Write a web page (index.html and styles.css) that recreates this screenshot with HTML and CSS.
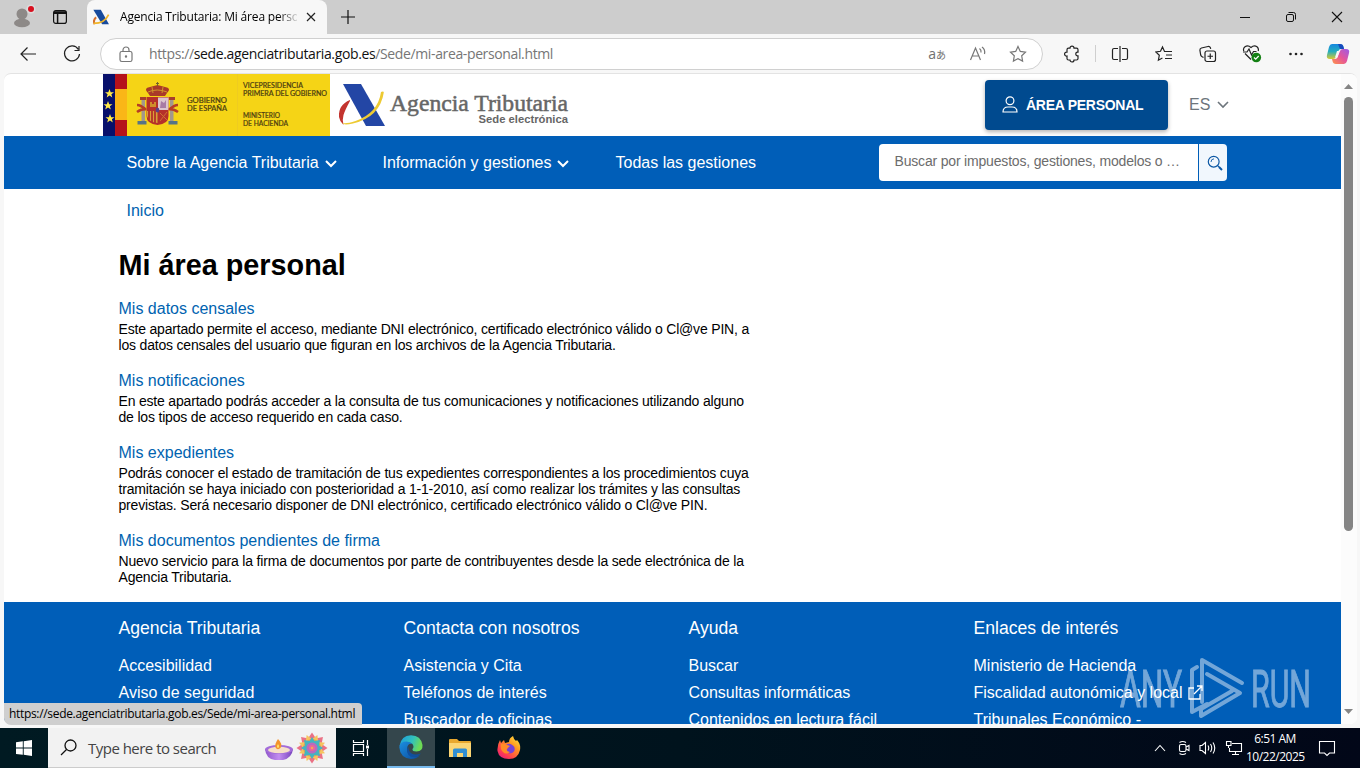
FILE: index.html
```html
<!DOCTYPE html>
<html lang="es">
<head>
    <meta charset="UTF-8">
    <title>Agencia Tributaria: Mi área personal</title>
    <link rel="stylesheet" href="styles.css">
</head>
<body>
<!-- pestañas -->
<div class="tabs">
    <div class="tabs-left">
        <svg class="profile" width="24" height="26" viewBox="0 0 24 26">
            <circle cx="12" cy="10" r="5.5" fill="#8d8987"/>
            <ellipse cx="12" cy="19" rx="8" ry="4.3" fill="#8d8987"/>
            <circle cx="21" cy="5" r="4.6" fill="#dcdcdc"/>
            <circle cx="21" cy="5" r="3" fill="#d8101f"/>
        </svg>
        <svg width="16" height="16" viewBox="0 0 16 16" fill="none" stroke="#111" stroke-width="1.2">
            <rect x="1.6" y="1.6" width="12.8" height="12.8" rx="2.2"/>
            <path d="M2 3h12M2 4.3h12M5.6 4v10" stroke-width="1.5"/>
        </svg>
    </div>
    <div class="tab">
        <svg width="17" height="16" viewBox="0 0 50 46">
            <path d="M9 24Q-1 34 5 44" fill="none" stroke="#d5702c" stroke-width="6"/>
            <path d="M1 2h22l24 42H27z" fill="#174a9c"/>
            <path d="M2 42Q34 42 46 16" fill="none" stroke="#f0b429" stroke-width="5"/>
        </svg>
        <span class="tab-title">Agencia Tributaria: Mi área personal</span>
        <svg width="10" height="10" viewBox="0 0 10 10" stroke="#222" stroke-width="1.2"><path d="M1 1l8 8M9 1l-8 8"/></svg>
    </div>
    <svg class="plus" width="14" height="14" viewBox="0 0 14 14" stroke="#111" stroke-width="1.2"><path d="M7 0v14M0 7h14"/></svg>
    <div class="win-buttons">
        <svg width="46" height="34" viewBox="0 0 46 34" stroke="#111"><path d="M18 17.5h10"/></svg>
        <svg width="46" height="34" viewBox="0 0 46 34" fill="none" stroke="#111"><rect x="18.5" y="14.5" width="7" height="7" rx="1.5"/><path d="M20.5 12.5h5a2 2 0 0 1 2 2v5"/></svg>
        <svg width="46" height="34" viewBox="0 0 46 34" stroke="#111" stroke-width="1.1"><path d="M18 12l10 10M28 12l-10 10"/></svg>
    </div>
</div>

<!-- barra de direcciones -->
<div class="toolbar">
    <div class="cell"><svg width="18" height="16" viewBox="0 0 18 16"><path d="M8.5 1.5L2 8l6.500 6.500M2 8h15"/></svg></div>
    <div class="cell"><svg width="18" height="18" viewBox="0 0 18 18"><path d="M15.300 4.300A7.500 7.500 0 1 0 16.500 9M16 1v4.500h-4.500"/></svg></div>
    <div class="address">
        <svg class="lock" width="14" height="17" viewBox="0 0 14 17"><rect x="1" y="5.500" width="12" height="10" rx="1.800"/><path d="M4 5.500V4a3 3 0 0 1 6 0v1.500"/><circle cx="7" cy="10.500" r=".6"/></svg>
        <span class="url">https://<b>sede.agenciatributaria.gob.es</b>/Sede/mi-area-personal.html</span>
        <span class="translate">a<i>あ</i></span>
        <svg class="read" width="18" height="16" viewBox="0 0 18 16"><path d="M1.500 14L6.500 2l5 12M3.200 10h6.600M10.500 2.500q2 1.500 1.500 4M13 1q3.500 2.500 2.500 7"/></svg>
        <svg width="18" height="18" viewBox="0 0 18 18"><path d="M9 1.500l2.300 4.900 5.200.7-3.800 3.700.9 5.300L9 13.600l-4.600 2.500.9-5.300L1.500 7.100l5.200-.7z"/></svg>
    </div>
    <div class="cell"><svg width="18" height="18" viewBox="0 0 18 18"><path d="M5.500 3.200H7a2 2 0 0 1 4 0h2.500q1.500 0 1.500 1.500v2.500h-.8a1.900 1.900 0 0 0 0 3.700h.8v2.600q0 1.500-1.500 1.500H11a2 2 0 0 1-4 0H5.500Q4 15 4 13.500V11a2 2 0 1 1 0-3.900V4.700q0-1.500 1.500-1.500z"/></svg></div>
    <div class="divider"></div>
    <div class="cell"><svg width="18" height="18" viewBox="0 0 18 18"><path d="M7 3.500H3a1.500 1.500 0 0 0-1.500 1.500v8A1.500 1.500 0 0 0 3 14.500h4M11 3.500h4A1.500 1.500 0 0 1 16.500 5v8a1.500 1.500 0 0 1-1.500 1.500h-4M9 1v16"/></svg></div>
    <div class="cell"><svg width="18" height="18" viewBox="0 0 18 18"><path d="M11 6.500H9.500L7.500 2 5.500 6.300l-4.700.7 3.500 3.300-.9 4.900 4-2.200M11 6.500h6M11 10h6M10 13.500h7"/></svg></div>
    <div class="cell"><svg width="18" height="18" viewBox="0 0 18 18"><rect x="6" y="6" width="10.500" height="10.500" rx="2"/><path d="M11.250 8.500v5.500M8.500 11.250H14M4.500 12.500L2.800 11.500q-.8-.5-1.100-1.500L.9 5.200Q.8 3.500 2.500 3L9 1.500q1.800-.2 2.400 1.300l.3 1"/></svg></div>
    <div class="cell"><svg width="20" height="19" viewBox="0 0 20 19"><path d="M9 15.500L3 9.500M1.800 7Q.8 4.500 3 2.700q3-2 6 .8 3-2.800 6-.8 2 1.800 1.200 4.300M1 8h4l2-3 2.500 6 2-3.500h3"/><circle cx="14.300" cy="13.500" r="4.800" fill="#148014" stroke="none"/><path d="M12 13.500l1.700 1.700 3-3.200" stroke="#fff"/></svg></div>
    <div class="cell"><svg width="16" height="4" viewBox="0 0 16 4"><g fill="#222" stroke="none"><circle cx="2.500" cy="2" r="1.300"/><circle cx="8" cy="2" r="1.300"/><circle cx="13.500" cy="2" r="1.300"/></g></svg></div>
    <div class="cell copilot"><svg width="24" height="22" viewBox="0 0 24 22">
        <defs>
            <linearGradient id="c1" x1="0" y1="0" x2="0" y2="1"><stop offset="0" stop-color="#1687e0"/><stop offset=".5" stop-color="#25aebd"/><stop offset="1" stop-color="#d9c931"/></linearGradient>
            <linearGradient id="c2" x1="1" y1="0" x2="0" y2="1"><stop offset="0" stop-color="#9b5be8"/><stop offset=".5" stop-color="#e5559a"/><stop offset="1" stop-color="#ff9448"/></linearGradient>
        </defs>
        <g stroke="none">
            <path d="M6 1h8q3 0 3.500 3l.5 2h-3q-2 0-2.600 2L10 14q-.8 2-3 2H4q-4 0-3-4L3 4q.8-3 3-3z" fill="url(#c1)"/>
            <path d="M18 21h-8q-3 0-3.500-3L6 16h3q2 0 2.600-2L14 8q.8-2 3-2h3q4 0 3 4l-2 8q-.8 3-3 3z" fill="url(#c2)"/>
            <path d="M12 1h2q3 0 3.500 3l.5 2h-4z" fill="#174bbd"/>
            <path d="M11 8h2.500l-2 6.500H9z" fill="#f7f7f7"/>
        </g>
    </svg></div>
</div>

<!-- ventana -->
<div class="window">
    <div class="page">
        <header class="header">
            <svg class="gob" width="227" height="62" viewBox="0 0 227 62">
                <rect width="227" height="62" fill="#f5d416"/>
                <rect width="12" height="62" fill="#08106b"/>
                <rect x="12" width="12" height="62" fill="#b5121b"/>
                <rect x="12" y="15" width="12" height="31" fill="#fab617"/>
                <path d="M134.500 0v62" stroke="#efcc20"/>
                <g fill="#ffe94a">
                    <path id="st" d="M6.500 15l1.200 3.200h3.300l-2.600 2.100.9 3.300-2.800-2-2.800 2 .9-3.300L2 18.200h3.300z"/>
                    <use href="#st" y="12" x="-1.500"/>
                    <use href="#st" y="25" x=".5"/>
                </g>
                <!-- escudo -->
                <path d="M45 19q-5-5 2-6l7.500-2 7.500 2q7 1 2 6l-2 3H47z" fill="#a93a28"/>
                <path d="M45 18q9-4 19 0M49 13l1 6M60 13l-1 6" fill="none" stroke="#d0952c"/>
                <path d="M54.500 8v4M53 9.500h3" stroke="#74602d"/>
                <path d="M43.500 23h22v19q0 8-11 9-11-1-11-9z" fill="#b5302a"/>
                <path d="M55 23.500h10.500V36H55z" fill="#dcc4cf"/>
                <path d="M57 34l1-7 3 2 2-3v8z" fill="#a87ba5"/>
                <path d="M47 33v-5h2v2h2v-2h2v5z" fill="#cf8e2a"/>
                <path d="M44 37h10.500v12q-9-1-10.500-7z" fill="#d8a137"/>
                <path d="M46 37v9M49 37v11M52 37v12" stroke="#b5302a" stroke-width="1.800"/>
                <path d="M57 39l7 7M64 38l-7 9" stroke="#cf7030"/>
                <ellipse cx="54.500" cy="36" rx="1.800" ry="2.500" fill="#5a3f86"/>
                <path d="M38.500 25h3.500v23h-3.500zM67 25h3.500v23H67z" fill="#a3988c"/>
                <path d="M37 23h6v3h-6zM66 23h6v3h-6z" fill="#a63f2c"/>
                <path d="M34.500 47h9v3.500h-9zM65.500 47h9v3.500h-9z" fill="#577485"/>
                <path d="M34 31q4 0 9 5M34 38q4-3 9-3M75 31q-4 0-9 5M75 38q-4-3-9-3" fill="none" stroke="#b63d25" stroke-width="2.500"/>
                <g class="gob-text">
                    <text x="84" y="29" textLength="40" lengthAdjust="spacingAndGlyphs">GOBIERNO</text>
                    <text x="84" y="37" textLength="40" lengthAdjust="spacingAndGlyphs">DE ESPAÑA</text>
                    <text x="140" y="13.500" textLength="60" lengthAdjust="spacingAndGlyphs">VICEPRESIDENCIA</text>
                    <text x="140" y="21.500" textLength="84" lengthAdjust="spacingAndGlyphs">PRIMERA DEL GOBIERNO</text>
                    <text x="140" y="44" textLength="37" lengthAdjust="spacingAndGlyphs">MINISTERIO</text>
                    <text x="140" y="51.500" textLength="45" lengthAdjust="spacingAndGlyphs">DE HACIENDA</text>
                </g>
            </svg>
            <svg class="aeat" width="240" height="62" viewBox="0 0 240 62">
                <path d="M15 26Q3 31 4 43q.5 4 4.500 8-1.500-5 0-10Q10 36 15 27z" fill="#c3342f"/>
                <path d="M8 10h18l24 42H31z" fill="#2346a5"/>
                <path d="M7.500 49q4 1 13-2Q43 39 46 18q2.800-1 2.800.5Q45 43 18 49.500q-10 2-10.500-.5z" fill="#edca32"/>
                <text class="aeat-name" x="55" y="37" textLength="178" lengthAdjust="spacingAndGlyphs">Agencia Tributaria</text>
                <text class="aeat-sub" x="143.500" y="49" textLength="89.500" lengthAdjust="spacingAndGlyphs">Sede electrónica</text>
            </svg>
            <a class="btn-area">
                <svg width="16" height="17" viewBox="0 0 16 17" fill="none" stroke="#fff" stroke-width="1.200"><circle cx="8" cy="4.800" r="3.900"/><path d="M1 16q0-5 5-5h4q5 0 5 5z"/></svg>
                <span>ÁREA PERSONAL</span>
            </a>
            <div class="lang">ES <svg width="12" height="8" viewBox="0 0 12 8" fill="none" stroke="#6d757c" stroke-width="1.600"><path d="M1 1l5 5 5-5"/></svg></div>
        </header>
        <nav class="nav">
            <a class="nav-1">Sobre la Agencia Tributaria <svg width="12" height="8" viewBox="0 0 12 8"><path d="M1 1l5 5 5-5"/></svg></a>
            <a class="nav-2">Información y gestiones <svg width="12" height="8" viewBox="0 0 12 8"><path d="M1 1l5 5 5-5"/></svg></a>
            <a class="nav-3">Todas las gestiones</a>
            <div class="search">
                <div class="search-input">Buscar por impuestos, gestiones, modelos o …</div>
                <div class="search-btn"><svg width="16" height="16" viewBox="0 0 16 16" fill="none" stroke="#0b57a4" stroke-width="1.200"><circle cx="6.700" cy="6.700" r="5.400"/><path d="M10.700 10.700l1.500 1.500"/><path d="M12 12l3 3" stroke-width="2"/><path d="M4 7q0-3 3-3.200" stroke-width=".9"/></svg></div>
            </div>
        </nav>
        <main class="main">
            <a class="miga">Inicio</a>
            <h1>Mi área personal</h1>
            <dl>
                <dt>Mis datos censales</dt>
                <dd>Este apartado permite el acceso, mediante DNI electrónico, certificado electrónico válido o Cl@ve PIN, a<br>los datos censales del usuario que figuran en los archivos de la Agencia Tributaria.</dd>
                <dt>Mis notificaciones</dt>
                <dd>En este apartado podrás acceder a la consulta de tus comunicaciones y notificaciones utilizando alguno<br>de los tipos de acceso requerido en cada caso.</dd>
                <dt>Mis expedientes</dt>
                <dd>Podrás conocer el estado de tramitación de tus expedientes correspondientes a los procedimientos cuya<br>tramitación se haya iniciado con posterioridad a 1-1-2010, así como realizar los trámites y las consultas<br>previstas. Será necesario disponer de DNI electrónico, certificado electrónico válido o Cl@ve PIN.</dd>
                <dt>Mis documentos pendientes de firma</dt>
                <dd>Nuevo servicio para la firma de documentos por parte de contribuyentes desde la sede electrónica de la<br>Agencia Tributaria.</dd>
            </dl>
        </main>
        <footer class="footer">
            <div>
                <h2>Agencia Tributaria</h2>
                <p>Accesibilidad</p>
                <p>Aviso de seguridad</p>
            </div>
            <div>
                <h2>Contacta con nosotros</h2>
                <p>Asistencia y Cita</p>
                <p>Teléfonos de interés</p>
                <p>Buscador de oficinas</p>
            </div>
            <div>
                <h2>Ayuda</h2>
                <p>Buscar</p>
                <p>Consultas informáticas</p>
                <p>Contenidos en lectura fácil</p>
            </div>
            <div>
                <h2>Enlaces de interés</h2>
                <p>Ministerio de Hacienda</p>
                <p>Fiscalidad autonómica y local <svg width="15" height="15" viewBox="0 0 15 15" fill="none" stroke="#fff" stroke-width="1.300"><path d="M6 3H1v11h11V9M9 1h5v5M14 1L6 9"/></svg></p>
                <p>Tribunales Económico -</p>
            </div>
        </footer>
    </div>
    <div class="scroll">
        <svg width="9" height="5" viewBox="0 0 9 5"><path d="M4.500 0L9 5H0z" fill="#858585"/></svg>
        <div class="thumb"></div>
        <svg width="9" height="5" viewBox="0 0 9 5"><path d="M0 0h9L4.500 5z" fill="#858585"/></svg>
    </div>
</div>

<!-- barra de tareas -->
<div class="taskbar">
    <div class="start"><svg width="16" height="16" viewBox="0 0 16 16" fill="#fff"><path d="M0 2.200l6.800-.9v6.300H0zM7.700 1.200L16 0v7.600H7.700zM0 8.500h6.800v6.300L0 13.900zM7.700 8.500H16V16l-8.300-1.200z"/></svg></div>
    <div class="task-search">
        <svg width="17" height="17" viewBox="0 0 17 17" fill="none" stroke="#111" stroke-width="1.300"><circle cx="10.500" cy="6.500" r="5.500"/><path d="M6.500 10.500L1 16"/></svg>
        <span>Type here to search</span>
        <svg class="diwali" width="64" height="32" viewBox="0 0 64 32">
            <defs><linearGradient id="bowl" x2="1"><stop stop-color="#9057ca"/><stop offset=".5" stop-color="#c28cf0"/><stop offset="1" stop-color="#7642bb"/></linearGradient></defs>
            <path d="M1 17q1 10 10 11h8q9-2 10-11z" fill="url(#bowl)"/>
            <ellipse cx="15" cy="17.500" rx="14" ry="4.500" fill="#a36cda"/>
            <ellipse cx="15" cy="18" rx="11" ry="3.200" fill="#f6dfc8"/>
            <path d="M14 7q5 5 2.500 9-3 2.500-5-.5Q10.500 12 14 7z" fill="#f4942d"/>
            <path d="M14 12q2 2 .5 4-2 0-1.500-2z" fill="#ffe36a"/>
            <g transform="translate(48 16)">
                <g id="pet"><path d="M-5-8L0-15.500 5-8z" fill="#ea7185"/></g>
                <use href="#pet" transform="rotate(45)"/><use href="#pet" transform="rotate(90)"/><use href="#pet" transform="rotate(135)"/>
                <use href="#pet" transform="rotate(180)"/><use href="#pet" transform="rotate(225)"/><use href="#pet" transform="rotate(270)"/><use href="#pet" transform="rotate(315)"/>
                <g fill="#f5c45f" transform="rotate(22.5)">
                    <path id="p1" d="M-4-7L0-14 4-7z"/>
                    <use href="#p1" transform="rotate(45)"/><use href="#p1" transform="rotate(90)"/><use href="#p1" transform="rotate(135)"/>
                    <use href="#p1" transform="rotate(180)"/><use href="#p1" transform="rotate(225)"/><use href="#p1" transform="rotate(270)"/><use href="#p1" transform="rotate(315)"/>
                </g>
                <circle r="9" fill="#eba34c"/>
                <path d="M0-11l2.500 4L8-8 7-2.500 11 0 7 2.500 8 8 2.500 7 0 11-2.500 7-8 8-7 2.500-11 0-7-2.500-8-8-2.500-7z" fill="#45b3c0"/>
                <circle r="5.500" fill="#b969bf"/><circle r="3" fill="#ec6796"/><circle r="1.200" fill="#f7a65b"/>
            </g>
        </svg>
    </div>
    <div class="app"><svg width="18" height="18" viewBox="0 0 18 18" fill="none" stroke="#fff" stroke-width="1.200"><path d="M1.500 1v2.500h10V1M1.500 17v-2.500h10V17M1.500 5.500h10v7h-10zM15.500 1v5M15.500 10v7"/><path d="M14 6.500h3v3h-3z" fill="#fff" stroke="none"/></svg></div>
    <div class="app active"><svg width="24" height="24" viewBox="0 0 24 24">
        <defs>
            <linearGradient id="e1" x2="1" y2=".3"><stop stop-color="#1c9ade"/><stop offset=".6" stop-color="#31c1bd"/><stop offset="1" stop-color="#6ddb55"/></linearGradient>
            <linearGradient id="e2" x2="1" y2="1"><stop stop-color="#1b8fe0"/><stop offset="1" stop-color="#0b4a9b"/></linearGradient>
        </defs>
        <path d="M.5 11Q2 .500 12 .200 22 .500 23.500 10q.5 6-6 6.500-4.500 0-4-2.500 2-2 0-5-4-4-13 2z" fill="url(#e1)"/>
        <path d="M.300 12Q1 6.500 7.500 6.500q4 0 6 2.500-5-1-5.500 5 .5 7 8 7.500 3 0 5-1.500-3 4-9 4Q1 23 .300 12z" fill="url(#e2)"/>
        <path d="M9 11Q6 18 11.500 21.500q6 2 10.500-3-9 3-12-3z" fill="#104f9e"/>
    </svg></div>
    <div class="app"><svg width="22" height="20" viewBox="0 0 22 20">
        <path d="M0 2q0-1 1-1h7l2 2h11q1 0 1 1v15H0z" fill="#e8a82e"/>
        <path d="M0 5h22v14H0z" fill="#fbd573"/>
        <path d="M4 19v-7q0-1.500 1.500-1.500h11Q18 10.500 18 12v7h-4v-4H8v4z" fill="#328fd2"/>
    </svg></div>
    <div class="app"><svg width="24" height="24" viewBox="0 0 24 24">
        <defs><linearGradient id="ff" x1="1" y1="0" x2=".2" y2="1"><stop stop-color="#fff044"/><stop offset=".4" stop-color="#ff9820"/><stop offset=".8" stop-color="#ff3b50"/><stop offset="1" stop-color="#e52278"/></linearGradient></defs>
        <path d="M3 4l1 3 3-3 1 3 4-1q0-4 4-6 .500 3 3 5l1-1q4 4 3 10-2 9-11 9Q2 23 .500 15 0 9 3 4z" fill="url(#ff)"/>
        <path d="M9 9q3-2 5.500-.5 4 2 3 6-1.500 3-5 3-4-.5-4-4l3-1.500z" fill="#7542d8"/>
        <path d="M4 8q4-1 6 1l3 1-3 2.500q-1 3 3 3.500-4 3-7 0Q3 13 4 8z" fill="#ff8c26"/>
    </svg></div>
    <div class="tray">
        <svg width="12" height="8" viewBox="0 0 12 8"><path d="M1 7l5-5.500L11 7"/></svg>
        <svg width="14" height="16" viewBox="0 0 14 16"><rect x="2.500" y="4.500" width="6.500" height="7" rx="1.500"/><path d="M9 7l3-1.500v5L9 9M2.500 2.500q3-2 6.500 0M2.500 13.500q3 2 6.500 0"/></svg>
        <svg width="18" height="16" viewBox="0 0 18 16"><path d="M1 5.500h2L6.500 2.500v11L3 10.500H1zM9 5.500q1.500 2.500 0 5M11.500 4q2.500 4 0 8M14 2.500q3.500 5.500 0 11"/></svg>
        <svg width="18" height="16" viewBox="0 0 18 16"><path d="M7 3.500h9.500v8h-12V8M10.500 11.500v3M7 14.500h7M1.500 1.500H6v4H1.500zM3.500 5.500V8"/></svg>
        <div class="clock">6:51 AM<br>10/22/2025</div>
        <svg width="18" height="17" viewBox="0 0 18 17"><path d="M1.500 1.500h15v11.500h-5L9 15.500 6.500 13h-5z"/></svg>
    </div>
</div>

<div class="status">https://sede.agenciatributaria.gob.es/Sede/mi-area-personal.html</div>
<svg class="anyrun" width="200" height="70" viewBox="0 0 200 70">
    <text x="5" y="55" textLength="62" lengthAdjust="spacingAndGlyphs">ANY</text>
    <text x="136" y="55" textLength="60" lengthAdjust="spacingAndGlyphs">RUN</text>
    <g fill="none" stroke="#fff" stroke-width="4" stroke-linejoin="round" stroke-linecap="round">
        <path d="M87 50V8l40 23M92 22l33 19-39 23V57l31-18"/>
        <path d="M82 15l-5 3v42l15-8"/>
    </g>
</svg>
</body>
</html>
```
FILE: styles.css
```css
*{
    padding: 0;
    margin: 0;
    box-sizing: border-box;
}
body{
    width: 1360px;
    height: 768px;
    overflow: hidden;
    position: relative;
    display: flex;
    flex-direction: column;
    background: #f7f7f7;
    font-family: "Liberation Sans", Arial, sans-serif;
    font-size: 16px;
    color: #000;
}
svg{
    display: block;
    flex: none;
}

/* navegador */
.tabs{
    height: 34px;
    flex: none;
    display: flex;
    align-items: center;
    background: #cdcdcd;
}
.tabs-left{
    width: 87px;
    height: 34px;
    padding: 0 0 0 10px;
    display: flex;
    align-items: center;
    gap: 18px;
}
.profile{
    overflow: visible;
}
.tab{
    width: 240px;
    height: 34px;
    padding: 0 11px 0 6px;
    display: flex;
    align-items: center;
    background: #f7f7f7;
    border-radius: 8px 8px 0 0;
}
.tab-title{
    width: 178px;
    margin: 0 9px 0 10px;
    overflow: hidden;
    white-space: nowrap;
    font: 12px/20px "Open Sans", sans-serif;
    letter-spacing: -.18px;
    -webkit-mask-image: linear-gradient(90deg, #000 158px, transparent 180px);
    mask-image: linear-gradient(90deg, #000 158px, transparent 180px);
}
.plus{
    margin-left: 14px;
}
.win-buttons{
    margin-left: auto;
    display: flex;
}
.toolbar{
    height: 39px;
    flex: none;
    padding: 0 2px 0 6px;
    display: flex;
    align-items: center;
    fill: none;
    stroke: #222;
    stroke-width: 1.2;
}
.cell{
    width: 44px;
    display: flex;
    justify-content: center;
}
.copilot{
    width: 40px;
}
.divider{
    width: 1px;
    height: 17px;
    margin: 0 2px 0 1px;
    background: #cfcfcf;
}
.address{
    width: 943px;
    height: 32px;
    margin: 1px 7px 0 6px;
    padding: 0 15px 0 18px;
    display: flex;
    align-items: center;
    border: 1px solid #d0d0d0;
    border-radius: 16px;
    background: #fff;
    stroke: #777;
}
.url{
    flex: 1;
    margin-left: 16px;
    font: 14px/20px "Open Sans", sans-serif;
    letter-spacing: -.37px;
    color: #767676;
}
.url b{
    font-weight: normal;
    color: #111;
}
.translate{
    font: 14px/20px "Open Sans", sans-serif;
    color: #707070;
}
.translate i{
    font: 10px "Noto Sans CJK JP", sans-serif;
}
.read{
    margin: 0 22px 0 23px;
}

/* cabecera */
.window{
    height: 651px;
    width: 1353px;
    flex: none;
    margin: 0 0 4px 4px;
    display: flex;
    border-top: 1px solid #e3e3e3;
    border-radius: 7px;
    overflow: hidden;
    background: #fff;
}
.page{
    width: 1337px;
    height: 650px;
    overflow: hidden;
}
.header{
    height: 62px;
    padding-left: 99px;
    display: flex;
}
.gob-text{
    font: 6.8px Lato, sans-serif;
    fill: #4a3c12;
    stroke: #4a3c12;
    stroke-width: .2px;
}
.aeat{
    margin-left: 5px;
}
.aeat-name{
    font: 23px "Liberation Serif", serif;
    fill: #666;
    stroke: #666;
    stroke-width: .5px;
}
.aeat-sub{
    font: bold 11.5px "Liberation Sans", sans-serif;
    fill: #666;
}
.btn-area{
    width: 183px;
    height: 50px;
    margin: 6px 0 0 410px;
    padding: 0 0 1px 17px;
    display: flex;
    align-items: center;
    gap: 8px;
    border-radius: 4px;
    background: #004a8f;
    box-shadow: 0 2px 4px rgba(0,0,0,.3);
    color: #fff;
    font-size: 14px;
    letter-spacing: -.27px;
    font-weight: bold;
}
.lang{
    margin-left: 21px;
    height: 61px;
    display: flex;
    align-items: center;
    gap: 7px;
    color: #6d757c;
}
.nav{
    height: 53px;
    padding-left: 122.5px;
    display: flex;
    align-items: center;
    background: #005eb8;
    color: #fff;
}
.nav a{
    display: flex;
    align-items: center;
    gap: 6px;
}
.nav a svg{
    margin-top: 3px;
    fill: none;
    stroke: #fff;
    stroke-width: 2;
}
.nav-1{
    width: 256px;
}
.nav-2{
    width: 233px;
}
.nav-3{
    width: 263.5px;
}
.search{
    width: 348px;
    height: 37px;
    display: flex;
    gap: 1px;
    border-radius: 4px;
    overflow: hidden;
}
.search-input{
    width: 319px;
    padding-left: 15.5px;
    background: #fff;
    color: #6c6c6c;
    font-size: 14px;
    letter-spacing: -.18px;
    line-height: 35px;
    white-space: nowrap;
}
.search-btn{
    flex: 1;
    padding-left: 4px;
    display: flex;
    align-items: center;
    justify-content: center;
    background: #f1f7fd;
}

/* contenido */
.main{
    height: 413px;
    padding: 12px 0 0 114.5px;
}
.miga{
    display: block;
    margin-left: 8px;
    line-height: 20px;
    color: #0063b0;
}
h1{
    margin-top: 26px;
    font-size: 28.8px;
    line-height: 36px;
}
dt{
    margin-top: 16px;
    line-height: 20px;
    color: #0063b0;
}
dd{
    margin: 2px 0 18px;
    font-size: 14px;
    letter-spacing: -.187px;
    line-height: 16px;
    white-space: nowrap;
}
dd + dt{
    margin-top: 0;
}
.footer{
    height: 160px;
    padding: 16px 0 0 114.5px;
    display: grid;
    grid-template-columns: repeat(4, 285px);
    background: #005eb8;
    color: #fff;
}
.footer h2{
    margin-bottom: 14px;
    font-size: 17.6px;
    font-weight: normal;
    line-height: 20px;
}
.footer p{
    display: flex;
    align-items: center;
    gap: 5px;
    line-height: 27px;
    white-space: nowrap;
}
.scroll{
    width: 16px;
    padding: 10px 1px 10px 0;
    display: flex;
    flex-direction: column;
    align-items: center;
    background: #fcfcfc;
}
.thumb{
    width: 9px;
    height: 434px;
    margin: 8px 0 auto;
    border-radius: 5px;
    background: #858585;
}

/* barra de tareas */
.taskbar{
    height: 40px;
    flex: none;
    display: flex;
    background: linear-gradient(90deg, #001a22, #00131d 50%, #020718);
    color: #fff;
}
.start,
.app{
    width: 48px;
    display: flex;
    align-items: center;
    justify-content: center;
}
.app{
    width: 49px;
}
.active{
    width: 48px;
    margin-left: 2px;
    background: #34464c;
    border-bottom: 2px solid #76b9ed;
}
.task-search{
    width: 288px;
    padding: 0 8px 0 12px;
    display: flex;
    align-items: center;
    background: #f2f2f2;
    border: 1px solid #ccc;
    border-width: 0 0 1px;
    color: #444;
    font: 15px "Open Sans", sans-serif;
}
.task-search span{
    margin-left: 11px;
    letter-spacing: -.52px;
}
.diwali{
    margin-left: auto;
}
.tray{
    margin-left: auto;
    padding-right: 24px;
    display: flex;
    align-items: center;
    gap: 8px;
    fill: none;
    stroke: #fff;
    stroke-width: 1.1;
}
.tray svg:nth-child(1){
    margin-right: 3px;
}
.clock{
    width: 58px;
    margin: 0 6px 0 -1px;
    text-align: center;
    white-space: nowrap;
    font: 12px/18px "Open Sans", sans-serif;
    letter-spacing: -.5px;
}
.tray svg:nth-child(4){
    margin-right: -4px;
}

/* capas por encima */
.status{
    position: absolute;
    left: 4px;
    top: 703px;
    width: 358px;
    height: 22px;
    padding-left: 5px;
    background: #cfcfcf;
    border-radius: 0 4px 0 7px;
    font: 12px/21px "Open Sans", sans-serif;
    letter-spacing: -.32px;
    white-space: nowrap;
}
.anyrun{
    position: absolute;
    left: 1115px;
    top: 652px;
    opacity: .45;
}
.anyrun text{
    font: 52px Roboto, sans-serif;
    fill: #fff;
    stroke: #fff;
    stroke-width: 1px;
}
```
